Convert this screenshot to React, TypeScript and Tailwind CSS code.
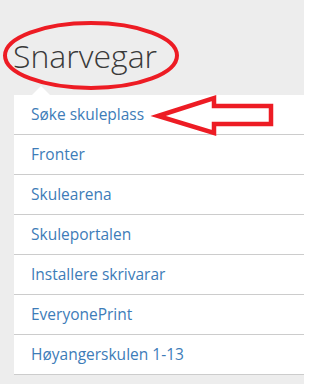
import React from "react";

const items = [
  "Søke skuleplass",
  "Fronter",
  "Skulearena",
  "Skuleportalen",
  "Installere skrivarar",
  "EveryonePrint",
  "Høyangerskulen 1-13",
];

export default function App() {
  return (
    <div
      className="relative w-[304px] h-[384px] overflow-hidden bg-[#ededed]"
      style={{ fontFamily: '"Open Sans", "Noto Sans", sans-serif' }}
    >
      <h1 className="mt-[40px] pl-[13px] h-[32px] leading-[32px] text-[32px] font-light text-[#3a3a3a]">
        Snarvegar
      </h1>
      <div className="relative mt-[23px] ml-[14px] bg-white">
        <div className="absolute -top-[9px] left-[18px] w-0 h-0 border-l-[9px] border-r-[9px] border-b-[9px] border-l-transparent border-r-transparent border-b-white" />
        {items.map((t) => (
          <div
            key={t}
            className="h-[40px] flex items-center pl-[17px] border-b border-[#cccccc] text-[15.5px] text-[#3d7cb8]"
          >
            {t}
          </div>
        ))}
      </div>
      <svg
        className="absolute left-0 top-0 pointer-events-none"
        width="304"
        height="384"
        viewBox="0 0 304 384"
      >
        <ellipse
          cx="91"
          cy="55.5"
          rx="86"
          ry="32.5"
          fill="none"
          stroke="#ed1c24"
          strokeWidth="4"
        />
        <polygon
          points="158,116 214,98 214,106 271,106 271,124 214,124 214,133"
          fill="none"
          stroke="#ed1c24"
          strokeWidth="4.5"
          strokeLinejoin="miter"
        />
      </svg>
    </div>
  );
}
